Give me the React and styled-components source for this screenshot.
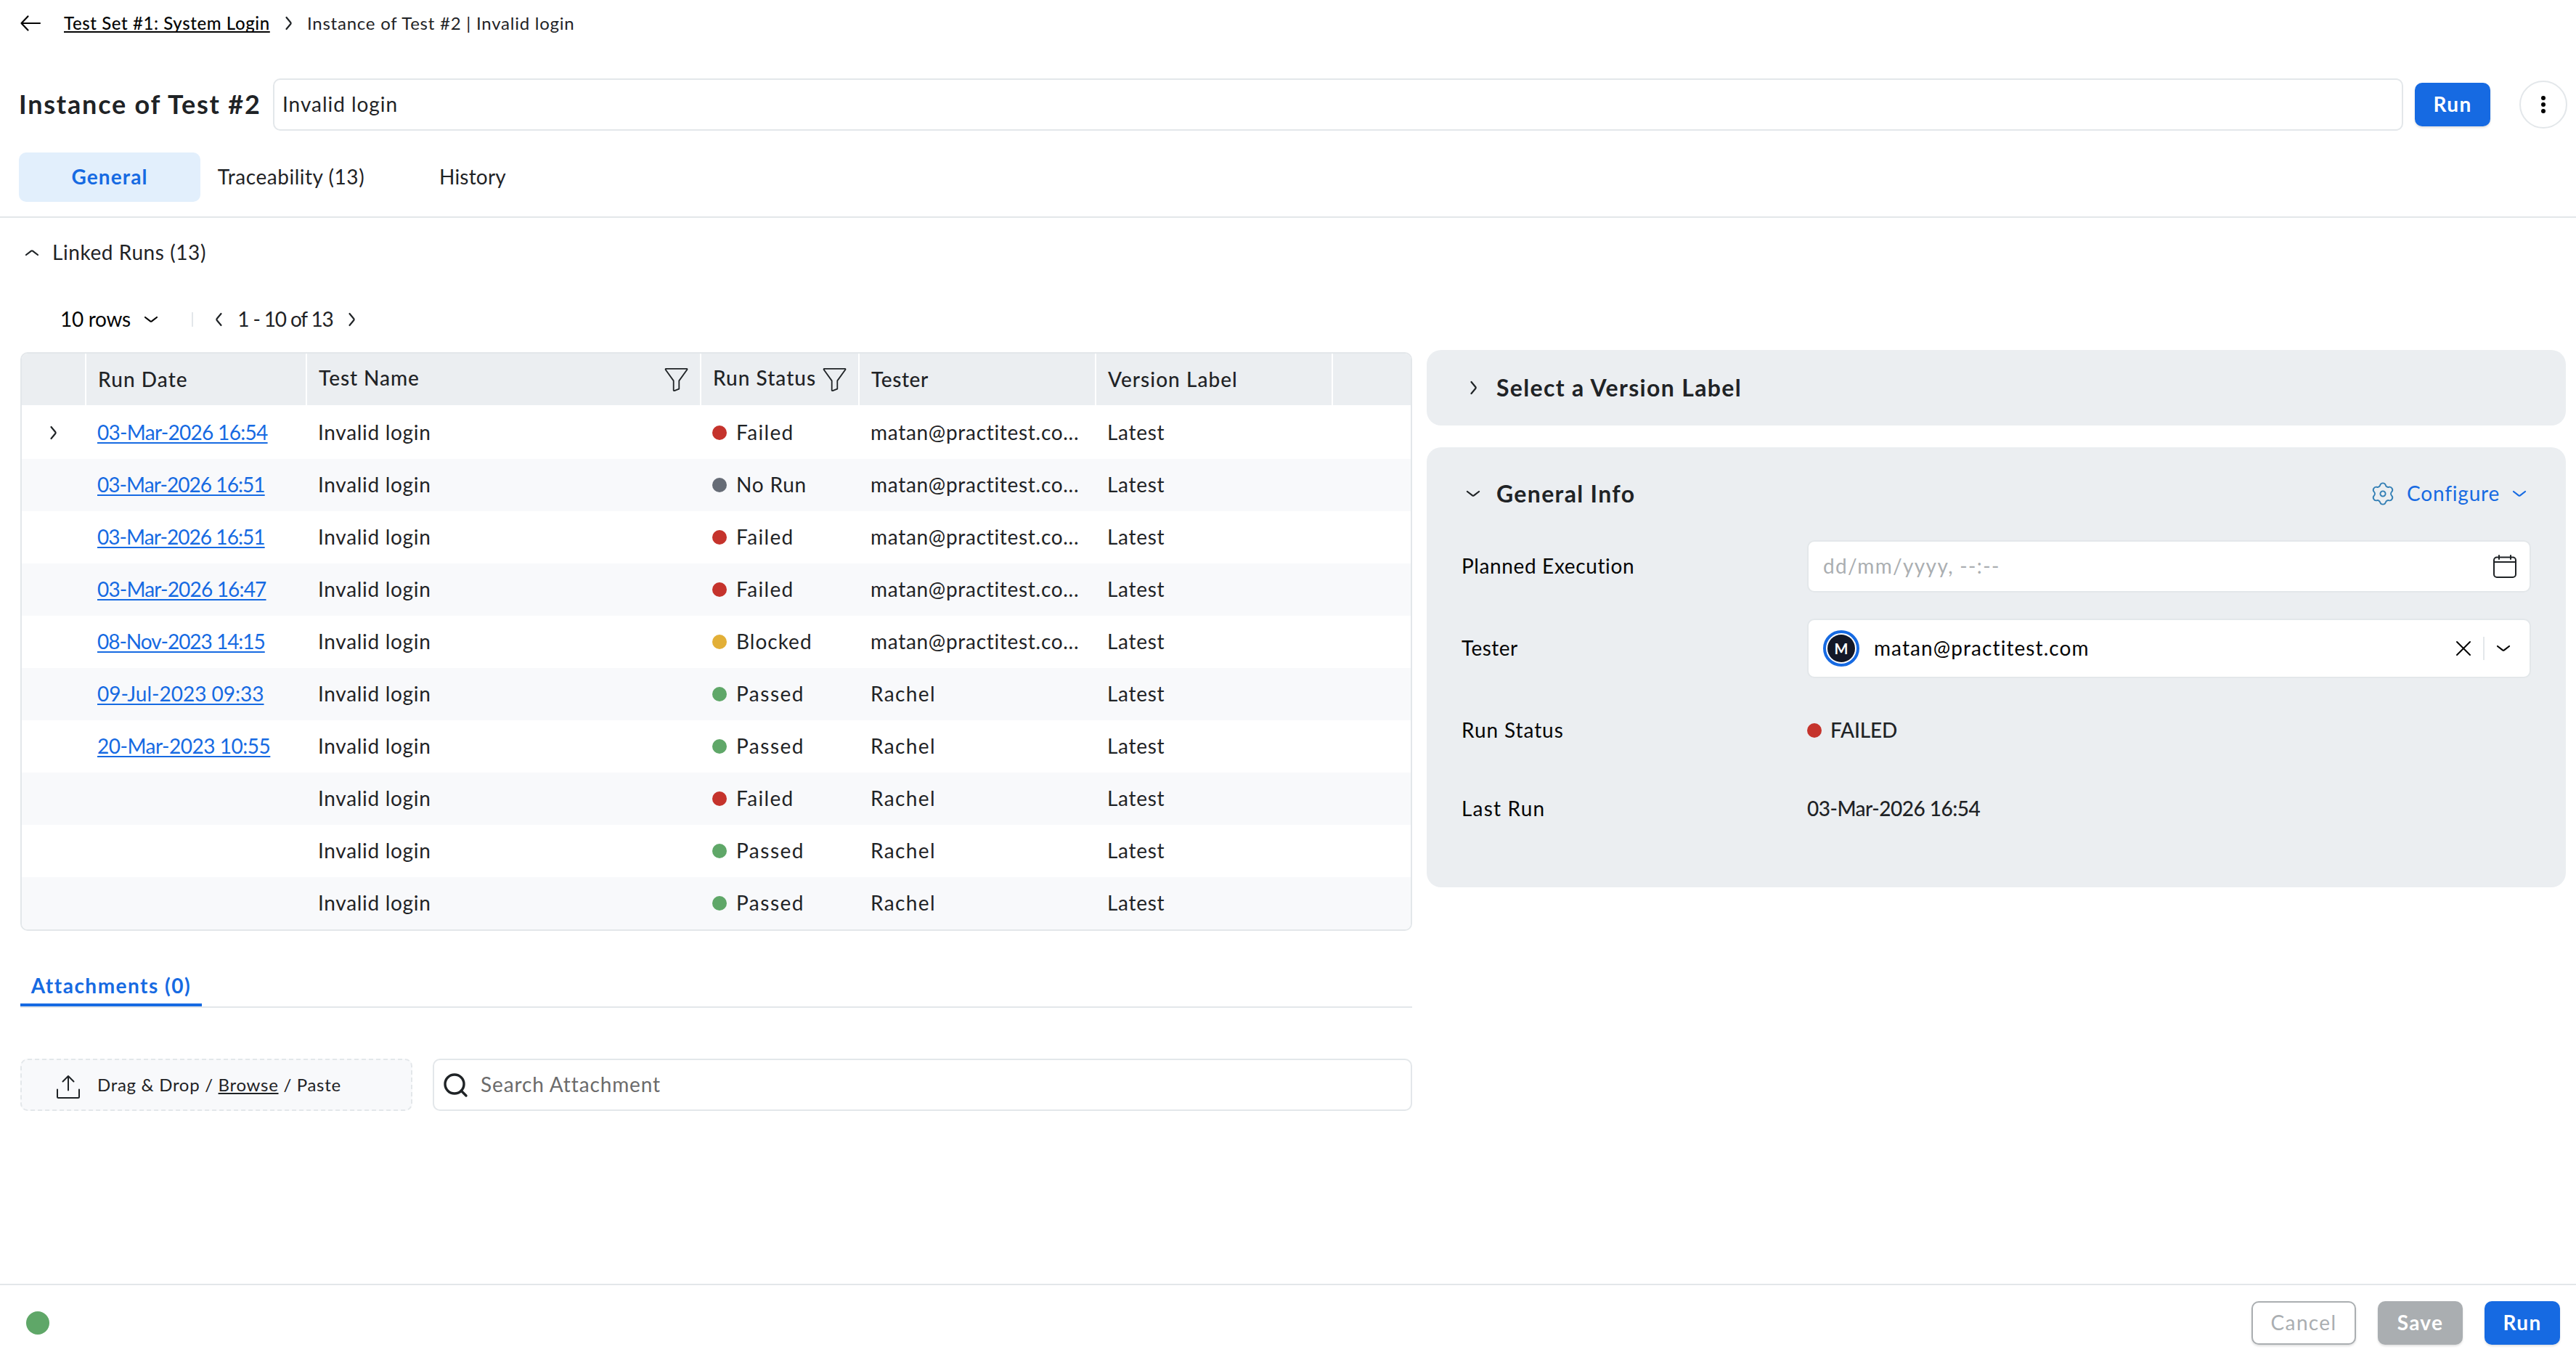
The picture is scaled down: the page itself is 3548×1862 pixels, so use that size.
import React from 'react';
import styled, { createGlobalStyle, css } from 'styled-components';

const color = {
  ink: '#1f2326',
  black: '#050505',
  blue: '#166ae2',
  line: '#e3e7ea',
  panel: '#ebeef1',
  stripe: '#f8f9fb',
  muted: '#aaaeb1',
  green: '#5fa768',
  red: '#c5332c',
  grey: '#666c76',
  amber: '#e2af37',
};

const GlobalStyle = createGlobalStyle`
  *, *::before, *::after { box-sizing: border-box; }
  body {
    margin: 0;
    background: #fff;
    color: ${color.ink};
    font-family: Lato, 'Open Sans', sans-serif;
    font-size: 28px;
    line-height: 34px;
  }
`;

/* ---------- shared parts ---------- */

const Text = styled.span`
  display: block;
  flex: none;
  padding-bottom: 2px;
  white-space: nowrap;
  letter-spacing: ${(p) => p.$track || 0}px;
  font-weight: ${(p) => p.$weight || 400};
  color: ${(p) => p.$color || 'inherit'};
`;

const Stroke = styled.svg`
  display: block;
  flex: none;
  overflow: visible;
  fill: none;
  stroke: ${(p) => p.$color || color.ink};
  stroke-width: ${(p) => p.$weight || 2.2};
  stroke-linecap: round;
  stroke-linejoin: round;
`;

const chevrons = {
  down: [18, 8, 'M1 1 L8 6.4 Q9 7.1 10 6.4 L17 1'],
  up: [18, 8, 'M1 7 L8 1.6 Q9 0.9 10 1.6 L17 7'],
  right: [9, 18, 'M1.5 1 L7.3 8 Q8 9 7.3 10 L1.5 17'],
  left: [9, 18, 'M7.5 1 L1.7 8 Q1 9 1.7 10 L7.5 17'],
};

function Chevron({ dir, tint, weight }) {
  const [w, h, d] = chevrons[dir];
  return (
    <Stroke width={w} height={h} viewBox={`0 0 ${w} ${h}`} $color={tint} $weight={weight}>
      <path d={d} />
    </Stroke>
  );
}

const Dot = styled.i`
  flex: none;
  width: ${(p) => p.$size || 20}px;
  height: ${(p) => p.$size || 20}px;
  border-radius: 50%;
  background: ${(p) => p.$tone};
`;

const buttonKinds = {
  primary: css`background: ${color.blue}; color: #fff; font-weight: 700;`,
  disabled: css`background: ${color.muted}; color: #fff; font-weight: 700;`,
  outline: css`background: #fff; color: ${color.muted}; border: 2px solid ${color.muted};`,
};

const Button = styled.button`
  flex: none;
  width: ${(p) => p.$width}px;
  height: 60px;
  padding: 0 0 2px;
  border: 0;
  border-radius: 10px;
  font: inherit;
  letter-spacing: 1.35px;
  text-align: center;
  box-shadow: 0 2px 3px rgba(0, 0, 0, 0.12);
  ${(p) => buttonKinds[p.$kind]}
`;

/* ---------- page frame ---------- */

const Page = styled.div`
  display: flex;
  flex-direction: column;
  width: 100%;
  height: 1862px;
  overflow: hidden;
`;

const Breadcrumb = styled.nav`
  display: flex;
  align-items: center;
  height: 64px;
  padding-left: 28px;
  font-size: 24px;
  line-height: 30px;
`;

const CrumbLink = styled.a`
  flex: none;
  width: 283px;
  margin: 0 22px 0 32px;
  white-space: nowrap;
  color: ${color.black};
  font-weight: 500;
  letter-spacing: 0.6px;
  text-decoration: underline;
  text-decoration-thickness: 2px;
  text-underline-offset: 2px;
  text-decoration-skip-ink: none;
`;

const CrumbHere = styled(Text)`
  margin-left: 21px;
  padding-bottom: 0;
`;

const TitleRow = styled.header`
  display: flex;
  align-items: center;
  height: 72px;
  margin-top: 44px;
  padding: 0 12px 0 26px;
`;

const Title = styled.h1`
  flex: none;
  width: 350px;
  margin: 0;
  padding-bottom: 2px;
  font-size: 36px;
  line-height: 44px;
  font-weight: 700;
  letter-spacing: 1.78px;
  white-space: nowrap;
`;

const NameField = styled.div`
  display: flex;
  flex: 1;
  align-items: center;
  height: 72px;
  margin-right: 16px;
  padding-left: 11px;
  border: 2px solid ${color.line};
  border-radius: 10px;
`;

const MoreButton = styled.button`
  display: grid;
  place-items: center;
  width: 66px;
  height: 66px;
  margin-left: 40px;
  padding: 0;
  border: 2px solid ${color.line};
  border-radius: 50%;
  background: #fff;
`;

const TabRow = styled.div`
  display: flex;
  height: 90px;
  margin-top: 30px;
  padding-left: 26px;
  border-bottom: 2px solid ${color.line};
`;

const Tab = styled.div`
  display: flex;
  justify-content: center;
  align-items: center;
  width: 250px;
  height: 68px;
  border-radius: 10px;
  ${(p) => p.$active && css`
    background: #e2effc;
    color: ${color.blue};
    font-weight: 700;
  `}
`;

const SectionHead = styled.div`
  display: flex;
  align-items: center;
  gap: 19px;
  height: 96px;
  padding-left: 35px;
`;

const Pager = styled.div`
  display: flex;
  align-items: center;
  height: 86px;
  padding: 2px 0 0 83px;
`;

const RowsSelect = styled.div`
  display: flex;
  align-items: center;
  justify-content: space-between;
  width: 134px;
  margin-right: 47px;
  color: ${color.black};
`;

const Rule = styled.i`
  flex: none;
  width: 2px;
  height: ${(p) => p.$height}px;
  background: ${color.line};
`;

const PageRange = styled.div`
  display: flex;
  align-items: center;
  justify-content: space-between;
  width: 192px;
  margin-left: 31px;
`;

const Content = styled.main`
  display: flex;
  flex: 1;
  gap: 20px;
  padding: 0 14px 0 28px;
`;

const LeftColumn = styled.section`
  flex: none;
  width: 1917px;
  padding-top: 3px;
`;

const RightColumn = styled.aside`
  display: flex;
  flex: 1;
  flex-direction: column;
  gap: 30px;
`;

/* ---------- runs table ---------- */

const Table = styled.div`
  overflow: hidden;
  border: 2px solid ${color.line};
  border-radius: 10px;
`;

const TableRow = styled.div`
  display: grid;
  grid-template-columns: 89px 304px 543px 218px 326px 326px 1fr;
  height: 72px;
  background: #fff;
  &:nth-child(odd) { background: ${color.stripe}; }
  &:nth-child(2) { height: 74px; padding-top: 2px; }
`;

const HeadRow = styled(TableRow)`
  && { height: 71px; background: ${color.panel}; }
`;

const HeadCell = styled.div`
  display: flex;
  align-items: center;
  justify-content: space-between;
  padding: 0 17px 0 ${(p) => p.$inset || 16}px;
  border-right: 2px solid #fff;
  font-weight: 500;
  &:last-child { border-right: 0; }
`;

const HeadText = styled(Text)`
  font-weight: 500;
`;

const FilterLabel = styled(HeadText)`
  padding-bottom: 6px;
`;

const Cell = styled.div`
  display: flex;
  align-items: center;
  gap: 13px;
  padding-left: 15px;
`;

const ExpandCell = styled.div`
  display: flex;
  align-items: center;
  padding-left: 39px;
`;

const RunLink = styled.a`
  padding-bottom: 2px;
  color: ${color.blue};
  letter-spacing: ${(p) => p.$track}px;
  white-space: nowrap;
  text-decoration: underline;
  text-decoration-thickness: 2px;
  text-underline-offset: 3px;
  text-decoration-skip-ink: none;
`;

/* ---------- attachments ---------- */

const AttachTabs = styled.div`
  display: flex;
  margin-top: 52px;
  border-bottom: 2px solid ${color.line};
`;

const AttachTab = styled.div`
  display: flex;
  align-items: center;
  justify-content: center;
  width: 250px;
  height: 52px;
  border-bottom: 4px solid ${color.blue};
  color: ${color.blue};
  font-weight: 700;
`;

const AttachRow = styled.div`
  display: flex;
  gap: 28px;
  height: 72px;
  margin-top: 70px;
`;

const DropZone = styled.div`
  display: flex;
  align-items: center;
  gap: 24px;
  width: 540px;
  padding-left: 48px;
  border: 2px dashed ${color.line};
  border-radius: 10px;
  background: ${color.stripe};
  font-size: 24px;
  line-height: 30px;
  & > svg { margin-top: 6px; }
`;

const DropText = styled(Text)`
  padding-bottom: 0;
`;

const Browse = styled.u`
  text-decoration-thickness: 2px;
  text-underline-offset: 2px;
  text-decoration-skip-ink: none;
`;

const SearchField = styled.div`
  display: flex;
  flex: 1;
  align-items: center;
  gap: 18px;
  padding-left: 13px;
  border: 2px solid ${color.line};
  border-radius: 10px;
`;

/* ---------- info panels ---------- */

const Panel = styled.section`
  padding: 0 48px;
  border-radius: 20px;
  background: ${color.panel};
`;

const PanelHead = styled.div`
  display: flex;
  align-items: center;
  height: ${(p) => p.$height}px;
`;

const ChevronSlot = styled.span`
  display: grid;
  place-items: center;
  width: 32px;
  margin-right: 16px;
`;

const PanelTitle = styled.h2`
  margin: 0;
  font-size: 32px;
  line-height: 38px;
  font-weight: 700;
  letter-spacing: 1.33px;
  white-space: nowrap;
`;

const Configure = styled.div`
  display: flex;
  align-items: center;
  margin: 0 7px 0 auto;
  color: ${color.blue};
  & > span { width: 126px; margin: 0 20px 0 18px; }
`;

const Fields = styled.div`
  display: flex;
  flex-direction: column;
  gap: 36px;
  padding-bottom: 72px;
`;

const Field = styled.div`
  display: grid;
  grid-template-columns: 476px 1fr;
  align-items: center;
  min-height: 72px;
  color: ${color.black};
`;

const Box = styled.div`
  display: flex;
  align-items: center;
  height: ${(p) => p.$height}px;
  padding: 0 ${(p) => p.$right}px 0 20px;
  border: 2px solid ${color.line};
  border-radius: 10px;
  background: #fff;
`;

const Spacer = styled.span`
  flex: 1;
`;

const Avatar = styled.span`
  display: grid;
  place-items: center;
  width: 50px;
  height: 50px;
  margin-right: 20px;
  padding: 2px;
  border: 4px solid ${color.blue};
  border-radius: 50%;
`;

const AvatarFace = styled.span`
  display: grid;
  place-items: center;
  width: 38px;
  height: 38px;
  border-radius: 50%;
  background: #131827;
  color: #fff;
  font-size: 20px;
  line-height: 24px;
  font-weight: 700;
`;

const SelectTools = styled.span`
  display: flex;
  align-items: center;
  gap: 17px;
`;

const Value = styled.div`
  display: flex;
  align-items: center;
  gap: 12px;
  color: ${color.ink};
`;

/* ---------- footer ---------- */

const Footer = styled.footer`
  display: flex;
  align-items: center;
  gap: 30px;
  height: 94px;
  padding: 12px 22px 0 36px;
  border-top: 2px solid ${color.line};
`;

/* ---------- icons ---------- */

const BackIcon = () => (
  <Stroke width="28" height="22" viewBox="0 0 28 22" $color={color.black}>
    <path d="M10.5 1.5 L1.5 11 L10.5 20.5 M1.5 11 H27" />
  </Stroke>
);

const FilterIcon = () => (
  <Stroke width="31" height="32" viewBox="0 0 31 32" $weight="1.8">
    <path d="M1.2 0.9 H29.8 Q31 1 30.2 2.3 L19.3 17.4 V28.6 L12.9 31.1 L11.7 30.8 V17.4 L0.8 2.3 Q0.2 1 1.2 0.9 Z" />
  </Stroke>
);

const DotsIcon = () => (
  <svg width="6" height="24" viewBox="0 0 6 24" fill="#000">
    <circle cx="3" cy="3" r="3" />
    <circle cx="3" cy="12" r="3" />
    <circle cx="3" cy="21" r="3" />
  </svg>
);

const UploadIcon = () => (
  <Stroke width="32" height="32" viewBox="0 0 32 32" $weight="2">
    <path d="M8.5 8.5 L16 1 L23.5 8.5 M16 1 V20.5 M1 19.5 V29.5 Q1 31 2.5 31 H29.5 Q31 31 31 29.5 V19.5" />
  </Stroke>
);

const SearchIcon = () => (
  <Stroke width="33" height="33" viewBox="0 0 33 33" $weight="3.4">
    <circle cx="15" cy="15" r="13" />
    <path d="M24.3 24.3 L31 31" />
  </Stroke>
);

const CalendarIcon = () => (
  <Stroke width="32" height="32" viewBox="0 0 32 32" $weight="2">
    <rect x="1" y="3.5" width="30" height="27.5" rx="4" />
    <path d="M1 10 H31 M8 1 V6 M24 1 V6" />
  </Stroke>
);

const ClearIcon = () => (
  <Stroke width="20" height="20" viewBox="0 0 20 20" $color={color.black} $weight="2">
    <path d="M1 1 L19 19 M19 1 L1 19" />
  </Stroke>
);

const point = (radius, deg) => {
  const a = (deg * Math.PI) / 180;
  return `${(radius * Math.sin(a)).toFixed(2)} ${(-radius * Math.cos(a)).toFixed(2)}`;
};

const gearPath = [0, 60, 120, 180, 240, 300].reduce(
  (d, a) => `${d} A4 4 0 0 1 ${point(12.4, a + 18)} A3.6 3.6 0 0 0 ${point(12.4, a + 42)}`,
  `M${point(12.4, -18)}`,
);

const GearIcon = () => (
  <Stroke width="30" height="32" viewBox="-15 -16 30 32" $color="#337fb5" $weight="1.9">
    <path d={`${gearPath} Z`} />
    <circle r="3.6" />
  </Stroke>
);

/* ---------- data ---------- */

const statuses = {
  Failed: [color.red, 1.35],
  'No Run': [color.grey, 0.8],
  Blocked: [color.amber, 1],
  Passed: [color.green, 1.5],
};

const testers = {
  'matan@practitest.co...': 0.7,
  Rachel: 1.4,
};

const runs = [
  ['03-Mar-2026 16:54', -0.7, 'Failed', 'matan@practitest.co...'],
  ['03-Mar-2026 16:51', -0.93, 'No Run', 'matan@practitest.co...'],
  ['03-Mar-2026 16:51', -0.93, 'Failed', 'matan@practitest.co...'],
  ['03-Mar-2026 16:47', -0.82, 'Failed', 'matan@practitest.co...'],
  ['08-Nov-2023 14:15', -1.03, 'Blocked', 'matan@practitest.co...'],
  ['09-Jul-2023 09:33', 0, 'Passed', 'Rachel'],
  ['20-Mar-2023 10:55', -0.48, 'Passed', 'Rachel'],
  ['', 0, 'Failed', 'Rachel'],
  ['', 0, 'Passed', 'Rachel'],
  ['', 0, 'Passed', 'Rachel'],
];

function RunsTable() {
  return (
    <Table>
      <HeadRow>
        <HeadCell />
        <HeadCell><HeadText $track={1.08} $weight={500}>Run Date</HeadText></HeadCell>
        <HeadCell><FilterLabel $track={0.93} $weight={500}>Test Name</FilterLabel><FilterIcon /></HeadCell>
        <HeadCell><FilterLabel $track={1.02} $weight={500}>Run Status</FilterLabel><FilterIcon /></HeadCell>
        <HeadCell><HeadText $track={0.59} $weight={500}>Tester</HeadText></HeadCell>
        <HeadCell><HeadText $track={1.04} $weight={500}>Version Label</HeadText></HeadCell>
        <HeadCell />
      </HeadRow>
      {runs.map(([date, track, status, tester], i) => (
        <TableRow key={i}>
          <ExpandCell>{i === 0 && <Chevron dir="right" />}</ExpandCell>
          <Cell>{date && <RunLink $track={track}>{date}</RunLink>}</Cell>
          <Cell><Text $track={0.7}>Invalid login</Text></Cell>
          <Cell>
            <Dot $tone={statuses[status][0]} />
            <Text $track={statuses[status][1]}>{status}</Text>
          </Cell>
          <Cell><Text $track={testers[tester]}>{tester}</Text></Cell>
          <Cell><Text $track={0.7}>Latest</Text></Cell>
        </TableRow>
      ))}
    </Table>
  );
}

export default function App() {
  return (
    <>
      <GlobalStyle />
      <Page>
        <Breadcrumb>
          <BackIcon />
          <CrumbLink>Test Set #1: System Login</CrumbLink>
          <Chevron dir="right" />
          <CrumbHere $track={0.76}>Instance of Test #2 | Invalid login</CrumbHere>
        </Breadcrumb>

        <TitleRow>
          <Title>Instance of Test #2</Title>
          <NameField><Text $track={0.97}>Invalid login</Text></NameField>
          <Button $kind="primary" $width={104}>Run</Button>
          <MoreButton><DotsIcon /></MoreButton>
        </TitleRow>

        <TabRow>
          <Tab $active><Text $weight={700} $track={1.11}>General</Text></Tab>
          <Tab><Text $track={0.53}>Traceability (13)</Text></Tab>
          <Tab><Text $track={0.2}>History</Text></Tab>
        </TabRow>

        <SectionHead>
          <Chevron dir="up" />
          <Text $track={0.58}>Linked Runs (13)</Text>
        </SectionHead>

        <Pager>
          <RowsSelect>
            <Text $track={-0.3}>10 rows</Text>
            <Chevron dir="down" tint={color.black} />
          </RowsSelect>
          <Rule $height={20} />
          <PageRange>
            <Chevron dir="left" />
            <Text $track={-1.15}>1 - 10 of 13</Text>
            <Chevron dir="right" />
          </PageRange>
        </Pager>

        <Content>
          <LeftColumn>
            <RunsTable />
            <AttachTabs>
              <AttachTab><Text $weight={700} $track={1.49}>Attachments (0)</Text></AttachTab>
            </AttachTabs>
            <AttachRow>
              <DropZone>
                <UploadIcon />
                <DropText $track={0.7}>Drag &amp; Drop / <Browse>Browse</Browse> / Paste</DropText>
              </DropZone>
              <SearchField>
                <SearchIcon />
                <Text $track={0.88} $color="#6b6b6b">Search Attachment</Text>
              </SearchField>
            </AttachRow>
          </LeftColumn>

          <RightColumn>
            <Panel>
              <PanelHead $height={104}>
                <ChevronSlot><Chevron dir="right" /></ChevronSlot>
                <PanelTitle>Select a Version Label</PanelTitle>
              </PanelHead>
            </Panel>
            <Panel>
              <PanelHead $height={128}>
                <ChevronSlot><Chevron dir="down" /></ChevronSlot>
                <PanelTitle>General Info</PanelTitle>
                <Configure>
                  <GearIcon />
                  <Text $track={0.81}>Configure</Text>
                  <Chevron dir="down" tint={color.blue} />
                </Configure>
              </PanelHead>
              <Fields>
                <Field>
                  <Text $track={0.62}>Planned Execution</Text>
                  <Box $height={72} $right={18}>
                    <Text $track={1.35} $color={color.muted}>dd/mm/yyyy, --:--</Text>
                    <Spacer />
                    <CalendarIcon />
                  </Box>
                </Field>
                <Field>
                  <Text $track={0.44}>Tester</Text>
                  <Box $height={82} $right={27}>
                    <Avatar><AvatarFace>M</AvatarFace></Avatar>
                    <Text $track={1.08}>matan@practitest.com</Text>
                    <Spacer />
                    <SelectTools>
                      <ClearIcon />
                      <Rule $height={32} />
                      <Chevron dir="down" tint={color.black} />
                    </SelectTools>
                  </Box>
                </Field>
                <Field>
                  <Text $track={0.92}>Run Status</Text>
                  <Value>
                    <Dot $tone={color.red} />
                    <Text $weight={500} $track={-0.16}>FAILED</Text>
                  </Value>
                </Field>
                <Field>
                  <Text $track={1.2}>Last Run</Text>
                  <Value><Text $weight={500} $track={-0.5}>03-Mar-2026 16:54</Text></Value>
                </Field>
              </Fields>
            </Panel>
          </RightColumn>
        </Content>

        <Footer>
          <Dot $tone={color.green} $size={32} />
          <Spacer />
          <Button $kind="outline" $width={144}>Cancel</Button>
          <Button $kind="disabled" $width={117}>Save</Button>
          <Button $kind="primary" $width={104}>Run</Button>
        </Footer>
      </Page>
    </>
  );
}
